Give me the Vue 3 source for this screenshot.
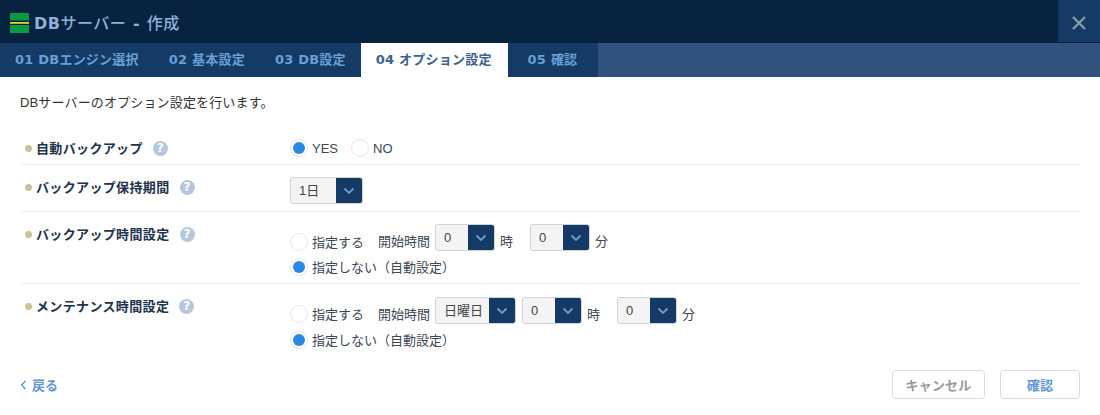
<script setup>
const tabs = [
  { id: 1, label: "01 DBエンジン選択" },
  { id: 2, label: "02 基本設定" },
  { id: 3, label: "03 DB設定" },
  { id: 4, label: "04 オプション設定", active: true },
  { id: 5, label: "05 確認", last: true },
]
</script>

<template>
  <div class="dialog">
    <header class="title-bar">
      <div class="title">
        <svg class="logo" width="19" height="20" viewBox="0 0 19 20">
          <rect width="19" height="7.5" y="0" fill="#0b9a43" />
          <rect width="19" height="1.8" y="9" fill="#e3d52e" />
          <rect width="19" height="8" y="12" fill="#0b9a43" />
        </svg>
        <span><b>DB</b>サーバー <b>-</b> 作成</span>
      </div>
      <button class="close">
        <svg width="16" height="16" viewBox="0 0 16 16">
          <path d="M2 2 L14 14 M14 2 L2 14" stroke="#8c99a8" stroke-width="2.4" fill="none" />
        </svg>
      </button>
    </header>

    <nav class="tabs">
      <div v-for="tab in tabs" :key="tab.id" class="tab" :class="{ active: tab.active, last: tab.last }">{{ tab.label }}</div>
    </nav>

    <main class="content">
      <p class="lead">DBサーバーのオプション設定を行います。</p>

      <section class="row row-1">
        <div class="label">
          <i class="dot"></i><b>自動バックアップ</b><span class="help">?</span>
        </div>
        <div class="field inline">
          <label class="radio"><i class="circle on"></i>YES</label>
          <label class="radio"><i class="circle"></i>NO</label>
        </div>
      </section>

      <section class="row row-2">
        <div class="label">
          <i class="dot"></i><b>バックアップ保持期間</b><span class="help">?</span>
        </div>
        <div class="field">
          <div class="select w-72"><span>1日</span><em><svg width="12" height="8" viewBox="0 0 12 8"><path d="M1.5 1.5 L6 6 L10.5 1.5" /></svg></em></div>
        </div>
      </section>

      <section class="row row-3">
        <div class="label">
          <i class="dot"></i><b>バックアップ時間設定</b><span class="help">?</span>
        </div>
        <div class="field">
          <div class="line">
            <label class="radio"><i class="circle"></i><span>指定する</span></label>
            <span class="start">開始時間</span>
            <div class="select"><span>0</span><em><svg width="12" height="8" viewBox="0 0 12 8"><path d="M1.5 1.5 L6 6 L10.5 1.5" /></svg></em></div>
            <span class="unit u-wide">時</span>
            <div class="select"><span>0</span><em><svg width="12" height="8" viewBox="0 0 12 8"><path d="M1.5 1.5 L6 6 L10.5 1.5" /></svg></em></div>
            <span class="unit">分</span>
          </div>
          <label class="radio"><i class="circle on"></i><span>指定しない（自動設定）</span></label>
        </div>
      </section>

      <section class="row row-4">
        <div class="label">
          <i class="dot"></i><b>メンテナンス時間設定</b><span class="help">?</span>
        </div>
        <div class="field">
          <div class="line">
            <label class="radio"><i class="circle"></i><span>指定する</span></label>
            <span class="start">開始時間</span>
            <div class="select w-81"><span>日曜日</span><em><svg width="12" height="8" viewBox="0 0 12 8"><path d="M1.5 1.5 L6 6 L10.5 1.5" /></svg></em></div>
            <div class="select ml-6"><span>0</span><em><svg width="12" height="8" viewBox="0 0 12 8"><path d="M1.5 1.5 L6 6 L10.5 1.5" /></svg></em></div>
            <span class="unit u-wide">時</span>
            <div class="select"><span>0</span><em><svg width="12" height="8" viewBox="0 0 12 8"><path d="M1.5 1.5 L6 6 L10.5 1.5" /></svg></em></div>
            <span class="unit">分</span>
          </div>
          <label class="radio"><i class="circle on"></i><span>指定しない（自動設定）</span></label>
        </div>
      </section>

      <footer class="footer">
        <a class="back"><svg width="7" height="10" viewBox="0 0 7 10"><path d="M5.5 1 L1.5 5 L5.5 9" /></svg>戻る</a>
        <div class="buttons">
          <button class="btn cancel">キャンセル</button>
          <button class="btn confirm">確認</button>
        </div>
      </footer>
    </main>
  </div>
</template>

<style>
html, body {
  margin: 0;
  background: #fff;
}
</style>

<style scoped>
.dialog {
  width: 1100px;
  height: 415px;
  overflow: hidden;
  font-family: "Liberation Sans", "Noto Sans CJK JP", sans-serif;
  font-size: 13px;
  color: #3c4654;
}

.title-bar {
  height: 43px;
  background: #082340;
  display: flex;
  justify-content: space-between;
}

.title {
  display: flex;
  align-items: center;
  gap: 5px;
  padding-left: 10px;
  font-family: "DejaVu Sans", "Noto Sans CJK JP", sans-serif;
  font-size: 16px;
  font-weight: 500;
  letter-spacing: 0.5px;
  word-spacing: 1px;
  color: #8fb0d6;
}

.title b {
  font-weight: 700;
}

.logo {
  flex: none;
  margin-top: 2px;
}

.close {
  width: 42px;
  height: 42px;
  padding: 4px 0 0;
  border: 0;
  background: #153a66;
  display: flex;
  align-items: center;
  justify-content: center;
}

.tabs {
  height: 34px;
  background: #31527f;
  display: flex;
}

.tab {
  padding: 0 15px;
  background: #153a66;
  color: #6a9fd4;
  font-family: "DejaVu Sans", "Noto Sans CJK JP", sans-serif;
  font-size: 13px;
  font-weight: 700;
  letter-spacing: 0.22px;
  line-height: 34px;
  white-space: nowrap;
}

.tab.active {
  padding-right: 16px;
  background: #fff;
  color: #3d6290;
}

.tab.last {
  padding: 0 21px 0 20px;
}

.content {
  padding: 0 20px;
}

.lead {
  margin: 0;
  padding-top: 17px;
  height: 38px;
  line-height: 17px;
  letter-spacing: 0.15px;
  color: #333;
}

.row {
  display: flex;
  border-bottom: 1px solid #e8eef4;
}

.row-1 { height: 32px; }
.row-2 { height: 46px; }
.row-3 { height: 71px; }
.row-4 { height: 68px; border-bottom: 0; }

.label {
  width: 270px;
  flex: none;
  display: flex;
  align-items: center;
  height: 20px;
  padding-left: 5px;
  box-sizing: border-box;
  margin-top: 12px;
  color: #22324a;
}

.row-1 .label { margin-top: 6px; }

.label b {
  font-weight: 700;
  letter-spacing: 0.35px;
  margin-top: -2px;
}

.dot {
  width: 7px;
  height: 7px;
  border-radius: 50%;
  background: #c9c29a;
  margin-right: 4px;
}

.help {
  width: 15px;
  height: 15px;
  border-radius: 50%;
  margin-left: 10px;
  background: #b5c7dc;
  color: #fff;
  font-family: "DejaVu Sans", sans-serif;
  font-size: 12px;
  font-weight: 700;
  line-height: 15px;
  text-align: center;
}

.field {
  display: flex;
  flex-direction: column;
  padding-top: 12px;
}

.row-4 .field { padding-top: 13px; }

.field.inline {
  flex-direction: row;
  gap: 13px;
  padding-top: 7px;
}

.radio {
  display: inline-flex;
  align-items: center;
  height: 18px;
}

.radio span {
  margin-top: -2px;
}

.circle {
  width: 18px;
  height: 18px;
  margin-right: 4px;
  border: 1px solid #e4e7eb;
  box-sizing: border-box;
  border-radius: 50%;
  background: #fff;
  position: relative;
  flex: none;
}

.circle.on::after {
  content: "";
  position: absolute;
  left: 2px;
  top: 2px;
  width: 12px;
  height: 12px;
  border-radius: 50%;
  background: #2b88e6;
}

.line {
  display: flex;
  align-items: flex-start;
  height: 34px;
}

.line .radio {
  margin-top: 9px;
}

.row-4 .line .radio {
  margin-top: 8px;
}

.start {
  margin-left: 14px;
  margin-right: 5px;
  margin-top: 7px;
}

.select {
  width: 60px;
  height: 27px;
  border: 1px solid #cfd3d8;
  border-radius: 3px;
  background: #f4f4f4;
  display: flex;
  box-sizing: border-box;
  overflow: hidden;
  color: #444;
  flex: none;
}

.select span {
  flex: 1;
  padding-left: 8px;
  line-height: 26px;
  white-space: nowrap;
}

.select em {
  width: 26px;
  flex: none;
  background: #153a66;
  display: flex;
  align-items: center;
  justify-content: center;
}

.select svg path {
  fill: none;
  stroke: #6a9fd4;
  stroke-width: 1.8;
}

.w-72 { width: 73px; }
.w-81 { width: 81px; }
.ml-6 { margin-left: 6px; }

.unit {
  margin-left: 5px;
  margin-top: 7px;
}

.u-wide {
  margin-right: 17px;
}

.footer {
  display: flex;
  justify-content: space-between;
  align-items: center;
  height: 29px;
  margin-top: 18px;
}

.back {
  display: flex;
  align-items: center;
  gap: 5px;
  color: #5f97d0;
  font-weight: 700;
}

.back svg path {
  fill: none;
  stroke: #5f97d0;
  stroke-width: 1.4;
}

.buttons {
  display: flex;
  gap: 15px;
}

.btn {
  height: 29px;
  padding: 0;
  border: 1px solid #dcdcdc;
  border-radius: 4px;
  background: #fff;
  font-family: inherit;
  font-size: 13px;
  font-weight: 700;
  letter-spacing: 0.2px;
}

.cancel {
  width: 93px;
  color: #999;
}

.confirm {
  width: 80px;
  color: #5f97d0;
}
</style>
